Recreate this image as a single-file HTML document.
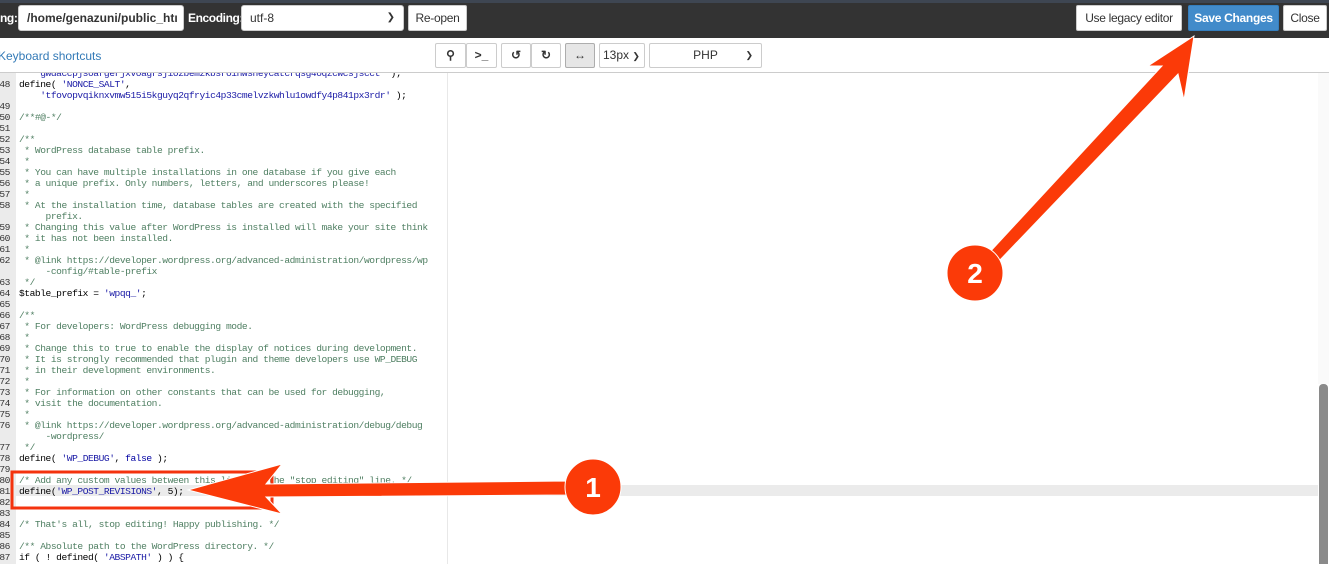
<!DOCTYPE html>
<html><head><meta charset="utf-8"><style>
*{box-sizing:border-box;margin:0;padding:0}
body{width:1329px;height:564px;overflow:hidden;background:#fff;font-family:"Liberation Sans",sans-serif;position:relative}
.top{position:absolute;left:0;top:0;width:1329px;height:38px;background:#333;border-top:3px solid #3e4652}
.ab{position:absolute}
.lbl{color:#fff;font-weight:bold;font-size:12px;letter-spacing:-0.4px}
.inp{background:#fff;border:1px solid #ccc;border-radius:3px;height:26px;font-size:12px;line-height:24px;padding-left:8px;color:#333;overflow:hidden;white-space:nowrap}
.btn{background:#fff;border:1px solid #ccc;border-radius:2px;height:26px;font-size:12px;line-height:24px;text-align:center;color:#333;letter-spacing:-0.3px}
.tb{position:absolute;left:0;top:38px;width:1329px;height:35px;border-bottom:1px solid #ccc}
.tbtn{position:absolute;top:5px;height:25px;border:1px solid #ccc;background:#fff;border-radius:2px;font-size:12px;line-height:23px;text-align:center;color:#333}
.ed{position:absolute;left:0;top:73px;width:1318px;height:491px;overflow:hidden}
.gut{position:absolute;left:0;top:0;width:16px;height:491px;background:#ebebeb}
.line{position:absolute;left:0;height:11px;width:1318px;font-family:"Liberation Mono",monospace;font-size:9.6px;letter-spacing:-0.45px;line-height:11px;white-space:pre;color:#000}
.ln{position:absolute;left:-6px;width:16px;text-align:right;color:#333}
.tx{position:absolute;left:19px}
.c{color:#4f7f62}
.s{color:#1a1aa6}
.k{color:#0000a2}
</style></head><body>
<div class="top">
<div class="ab lbl" style="left:0;top:8px">ng:</div>
<div class="ab inp" style="left:18px;top:2px;width:166px;font-weight:bold">/home/genazuni/public_htı</div>
<div class="ab lbl" style="left:188px;top:8px">Encoding:</div>
<div class="ab inp" style="left:241px;top:2px;width:163px">utf-8<span style="position:absolute;right:8px;font-size:10px">&#10095;</span></div>
<div class="ab btn" style="left:408px;top:2px;width:59px">Re-open</div>
<div class="ab btn" style="left:1076px;top:2px;width:106px">Use legacy editor</div>
<div class="ab btn" style="left:1188px;top:2px;width:91px;background:#428bca;border-color:#357ebd;color:#fff;font-weight:bold">Save Changes</div>
<div class="ab btn" style="left:1283px;top:2px;width:44px">Close</div>
</div>
<div class="tb">
<div class="ab" style="left:-2px;top:11px;font-size:12px;color:#337ab7">Keyboard shortcuts</div>
<div class="tbtn" style="left:435px;width:31px;font-weight:bold">&#9906;</div>
<div class="tbtn" style="left:466px;width:31px;font-weight:bold">&gt;_</div>
<div class="tbtn" style="left:501px;width:30px;font-weight:bold">&#8634;</div>
<div class="tbtn" style="left:531px;width:30px;font-weight:bold">&#8635;</div>
<div class="tbtn" style="left:565px;width:30px;background:#e6e6e6;border-color:#adadad;font-weight:bold">&#8596;</div>
<div class="tbtn" style="left:599px;width:46px;text-align:left;padding-left:3px">13px <span style="font-size:9px">&#10095;</span></div>
<div class="tbtn" style="left:649px;width:113px">PHP<span style="position:absolute;right:8px;font-size:9px">&#10095;</span></div>
</div>
<div class="ed">
<div class="gut"></div>
<div style="position:absolute;left:447px;top:0;width:1px;height:491px;background:#e8e8e8"></div>
<div style="position:absolute;left:16px;top:412px;width:1302px;height:11px;background:#ebebeb"></div>
<div id="code"></div>
</div>
<div class="ab" style="left:1319px;top:384px;width:9px;height:180px;background:#8a8a8a;border-radius:4px 4px 0 0"></div>
<div class="ab" style="left:1318px;top:73px;width:11px;height:311px;background:#fafafa"></div>
<svg class="ab" style="left:0;top:0" width="1329" height="564">
<rect x="12" y="472" width="260" height="36" fill="none" stroke="#f4330e" stroke-width="3"/>
<polygon points="188,490 282,464 266,484 566,481 566,495 266,497 282,514" fill="#fb3a08" stroke="#fff" stroke-width="1"/>
<circle cx="593" cy="487" r="28" fill="#fb3a08" stroke="#fff" stroke-width="1"/>
<text x="593" y="497" font-family="Liberation Sans" font-size="28" font-weight="bold" fill="#fff" text-anchor="middle">1</text>
<polygon points="1194,36 1184,100 1178,74 998,262 988,254 1162,66 1148,66" fill="#fb3a08" stroke="#fff" stroke-width="1"/>
<circle cx="975" cy="273" r="28" fill="#fb3a08" stroke="#fff" stroke-width="1"/>
<text x="975" y="283" font-family="Liberation Sans" font-size="28" font-weight="bold" fill="#fff" text-anchor="middle">2</text>
</svg>
<script>
var L=[
["","<span class=s>    gwdaccpjsoargerjxvoagrsjiozbemzkbsroinwsneycatcrqsg4oqzcwcsjscct'</span> );"],
["48","define( <span class=s>'NONCE_SALT'</span>,"],
["","    <span class=s>'tfovopvqiknxvmw515i5kguyq2qfryic4p33cmelvzkwhlu1owdfy4p841px3rdr'</span> );"],
["49",""],["50","<span class=c>/**#@-*/</span>"],["51",""],
["52","<span class=c>/**</span>"],
["53","<span class=c> * WordPress database table prefix.</span>"],
["54","<span class=c> *</span>"],
["55","<span class=c> * You can have multiple installations in one database if you give each</span>"],
["56","<span class=c> * a unique prefix. Only numbers, letters, and underscores please!</span>"],
["57","<span class=c> *</span>"],
["58","<span class=c> * At the installation time, database tables are created with the specified</span>"],
["","<span class=c>     prefix.</span>"],
["59","<span class=c> * Changing this value after WordPress is installed will make your site think</span>"],
["60","<span class=c> * it has not been installed.</span>"],
["61","<span class=c> *</span>"],
["62","<span class=c> * @link https://developer.wordpress.org/advanced-administration/wordpress/wp</span>"],
["","<span class=c>     -config/#table-prefix</span>"],
["63","<span class=c> */</span>"],
["64","$table_prefix = <span class=s>'wpqq_'</span>;"],
["65",""],
["66","<span class=c>/**</span>"],
["67","<span class=c> * For developers: WordPress debugging mode.</span>"],
["68","<span class=c> *</span>"],
["69","<span class=c> * Change this to true to enable the display of notices during development.</span>"],
["70","<span class=c> * It is strongly recommended that plugin and theme developers use WP_DEBUG</span>"],
["71","<span class=c> * in their development environments.</span>"],
["72","<span class=c> *</span>"],
["73","<span class=c> * For information on other constants that can be used for debugging,</span>"],
["74","<span class=c> * visit the documentation.</span>"],
["75","<span class=c> *</span>"],
["76","<span class=c> * @link https://developer.wordpress.org/advanced-administration/debug/debug</span>"],
["","<span class=c>     -wordpress/</span>"],
["77","<span class=c> */</span>"],
["78","define( <span class=s>'WP_DEBUG'</span>, <span class=k>false</span> );"],
["79",""],
["80","<span class=c>/* Add any custom values between this line and the \"stop editing\" line. */</span>"],
["81","define(<span class=s>'WP_POST_REVISIONS'</span>, 5);"],
["82",""],["83",""],
["84","<span class=c>/* That's all, stop editing! Happy publishing. */</span>"],
["85",""],
["86","<span class=c>/** Absolute path to the WordPress directory. */</span>"],
["87","if ( ! defined( <span class=s>'ABSPATH'</span> ) ) {"]
];
var h="";for(var i=0;i<L.length;i++){h+='<div class="line" style="top:'+(i*11-5)+'px"><span class="ln">'+L[i][0]+'</span><span class="tx">'+L[i][1]+'</span></div>';}
document.getElementById("code").innerHTML=h;
</script>
</body></html>
